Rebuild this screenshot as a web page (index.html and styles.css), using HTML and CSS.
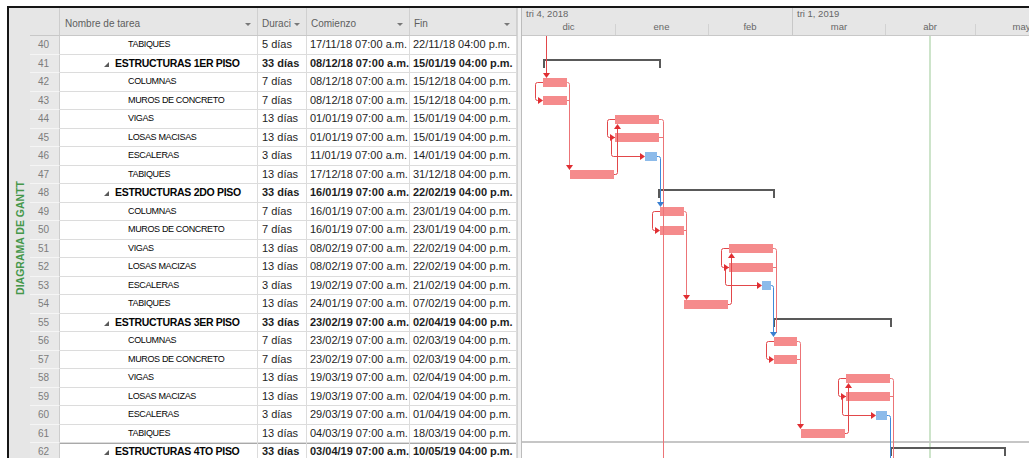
FILE: index.html
```html
<!DOCTYPE html>
<html lang="es">
<head>
<meta charset="utf-8">
<title>Diagrama de Gantt</title>
<link rel="stylesheet" href="styles.css">
</head>
<body>
<div class="frame">
  <div class="view-label"><span>DIAGRAMA DE GANTT</span></div>

  <div class="sheet">
    <div class="head">
      <div class="hcell"></div>
      <div class="hcell"><span>Nombre de tarea</span><i class="caret"></i></div>
      <div class="hcell"><span>Duraci</span><i class="caret"></i></div>
      <div class="hcell"><span>Comienzo</span><i class="caret"></i></div>
      <div class="hcell"><span>Fin</span><i class="caret"></i></div>
    </div>

    <div class="row"><div class="num">40</div><div class="name">TABIQUES</div><div class="dur">5 días</div><div class="date">17/11/18 07:00 a.m.</div><div class="date">22/11/18 04:00 p.m.</div></div>
    <div class="row summary"><div class="num">41</div><div class="name"><i class="twisty"></i>ESTRUCTURAS 1ER PISO</div><div class="dur">33 días</div><div class="date">08/12/18 07:00 a.m.</div><div class="date">15/01/19 04:00 p.m.</div></div>
    <div class="row"><div class="num">42</div><div class="name">COLUMNAS</div><div class="dur">7 días</div><div class="date">08/12/18 07:00 a.m.</div><div class="date">15/12/18 04:00 p.m.</div></div>
    <div class="row"><div class="num">43</div><div class="name">MUROS DE CONCRETO</div><div class="dur">7 días</div><div class="date">08/12/18 07:00 a.m.</div><div class="date">15/12/18 04:00 p.m.</div></div>
    <div class="row"><div class="num">44</div><div class="name">VIGAS</div><div class="dur">13 días</div><div class="date">01/01/19 07:00 a.m.</div><div class="date">15/01/19 04:00 p.m.</div></div>
    <div class="row"><div class="num">45</div><div class="name">LOSAS MACISAS</div><div class="dur">13 días</div><div class="date">01/01/19 07:00 a.m.</div><div class="date">15/01/19 04:00 p.m.</div></div>
    <div class="row"><div class="num">46</div><div class="name">ESCALERAS</div><div class="dur">3 días</div><div class="date">11/01/19 07:00 a.m.</div><div class="date">14/01/19 04:00 p.m.</div></div>
    <div class="row"><div class="num">47</div><div class="name">TABIQUES</div><div class="dur">13 días</div><div class="date">17/12/18 07:00 a.m.</div><div class="date">31/12/18 04:00 p.m.</div></div>
    <div class="row summary"><div class="num">48</div><div class="name"><i class="twisty"></i>ESTRUCTURAS 2DO PISO</div><div class="dur">33 días</div><div class="date">16/01/19 07:00 a.m.</div><div class="date">22/02/19 04:00 p.m.</div></div>
    <div class="row"><div class="num">49</div><div class="name">COLUMNAS</div><div class="dur">7 días</div><div class="date">16/01/19 07:00 a.m.</div><div class="date">23/01/19 04:00 p.m.</div></div>
    <div class="row"><div class="num">50</div><div class="name">MUROS DE CONCRETO</div><div class="dur">7 días</div><div class="date">16/01/19 07:00 a.m.</div><div class="date">23/01/19 04:00 p.m.</div></div>
    <div class="row"><div class="num">51</div><div class="name">VIGAS</div><div class="dur">13 días</div><div class="date">08/02/19 07:00 a.m.</div><div class="date">22/02/19 04:00 p.m.</div></div>
    <div class="row"><div class="num">52</div><div class="name">LOSAS MACIZAS</div><div class="dur">13 días</div><div class="date">08/02/19 07:00 a.m.</div><div class="date">22/02/19 04:00 p.m.</div></div>
    <div class="row"><div class="num">53</div><div class="name">ESCALERAS</div><div class="dur">3 días</div><div class="date">19/02/19 07:00 a.m.</div><div class="date">21/02/19 04:00 p.m.</div></div>
    <div class="row"><div class="num">54</div><div class="name">TABIQUES</div><div class="dur">13 días</div><div class="date">24/01/19 07:00 a.m.</div><div class="date">07/02/19 04:00 p.m.</div></div>
    <div class="row summary"><div class="num">55</div><div class="name"><i class="twisty"></i>ESTRUCTURAS 3ER PISO</div><div class="dur">33 días</div><div class="date">23/02/19 07:00 a.m.</div><div class="date">02/04/19 04:00 p.m.</div></div>
    <div class="row"><div class="num">56</div><div class="name">COLUMNAS</div><div class="dur">7 días</div><div class="date">23/02/19 07:00 a.m.</div><div class="date">02/03/19 04:00 p.m.</div></div>
    <div class="row"><div class="num">57</div><div class="name">MUROS DE CONCRETO</div><div class="dur">7 días</div><div class="date">23/02/19 07:00 a.m.</div><div class="date">02/03/19 04:00 p.m.</div></div>
    <div class="row"><div class="num">58</div><div class="name">VIGAS</div><div class="dur">13 días</div><div class="date">19/03/19 07:00 a.m.</div><div class="date">02/04/19 04:00 p.m.</div></div>
    <div class="row"><div class="num">59</div><div class="name">LOSAS MACIZAS</div><div class="dur">13 días</div><div class="date">19/03/19 07:00 a.m.</div><div class="date">02/04/19 04:00 p.m.</div></div>
    <div class="row"><div class="num">60</div><div class="name">ESCALERAS</div><div class="dur">3 días</div><div class="date">29/03/19 07:00 a.m.</div><div class="date">01/04/19 04:00 p.m.</div></div>
    <div class="row"><div class="num">61</div><div class="name">TABIQUES</div><div class="dur">13 días</div><div class="date">04/03/19 07:00 a.m.</div><div class="date">18/03/19 04:00 p.m.</div></div>
    <div class="row summary page-break"><div class="num">62</div><div class="name"><i class="twisty"></i>ESTRUCTURAS 4TO PISO</div><div class="dur">33 días</div><div class="date">03/04/19 07:00 a.m.</div><div class="date">10/05/19 04:00 p.m.</div></div>
  </div>

  <div class="splitter"></div>

  <div class="chart">
    <div class="scale">
      <div class="tier quarters">
        <div class="quarter q4">tri 4, 2018</div>
        <div class="quarter q1">tri 1, 2019</div>
      </div>
      <div class="tier months">
        <div class="month m93">dic</div>
        <div class="month m93">ene</div>
        <div class="month m84">feb</div>
        <div class="month m93 qstart">mar</div>
        <div class="month m90">abr</div>
        <div class="month m93">may</div>
      </div>
    </div>

    <svg class="bars" width="507" height="422" viewBox="522 36 507 422" xmlns="http://www.w3.org/2000/svg">
      <!-- status / break lines -->
      <rect x="929" y="36" width="2" height="422" fill="#cde4ca"/>
      <rect x="522" y="441" width="507" height="2" fill="#c6c6c6"/>

      <!-- task bars -->
      <g fill="#f58b8c">
        <rect x="543" y="78" width="24" height="9"/>
        <rect x="543" y="96" width="24" height="9"/>
        <rect x="615" y="115" width="44" height="9"/>
        <rect x="615" y="133" width="44" height="9"/>
        <rect x="570" y="170" width="44" height="9"/>

        <rect x="660" y="207" width="24" height="9"/>
        <rect x="660" y="226" width="24" height="9"/>
        <rect x="729" y="244" width="44" height="9"/>
        <rect x="729" y="263" width="44" height="9"/>
        <rect x="684" y="300" width="44" height="9"/>

        <rect x="774" y="337" width="23" height="9"/>
        <rect x="774" y="355" width="23" height="9"/>
        <rect x="846" y="374" width="44" height="9"/>
        <rect x="846" y="392" width="44" height="9"/>
        <rect x="801" y="429" width="44" height="9"/>
      </g>
      <g fill="#8dbbea">
        <rect x="645" y="152" width="12" height="9"/>
        <rect x="762" y="281" width="9" height="9"/>
        <rect x="876" y="411" width="11" height="9"/>
      </g>

      <!-- summary brackets -->
      <g fill="none" stroke="#595959" stroke-width="2">
        <path d="M544,68 V60 H660 V68"/>
        <path d="M659,198 V190 H774 V198"/>
        <path d="M774,327 V319 H891 V327"/>
        <path d="M891,456 V448 H1005 V456"/>
      </g>

      <!-- finish-side links -->
      <g fill="none" stroke="#ec7477" stroke-width="1">
        <path d="M567,82.5 H567.5 q2,0 2,2 V166"/>
        <path d="M567,100.5 H569.5"/>
        <path d="M659,119.5 H661.5 q2,0 2,2 V458"/>
        <path d="M659,137.5 H663.5"/>
        <path d="M684,211.5 H684.5 q2,0 2,2 V296"/>
        <path d="M684,230.5 H686.5"/>
        <path d="M773,248.5 H774.5 q2,0 2,2 V333"/>
        <path d="M773,267.5 H776.5"/>
        <path d="M797,341.5 H798.5 q2,0 2,2 V425"/>
        <path d="M797,359.5 H800.5"/>
        <path d="M890,378.5 H891.5 q2,0 2,2 V458"/>
        <path d="M890,396.5 H893.5"/>
      </g>

      <!-- start-side and return links -->
      <g fill="none" stroke="#e2474a" stroke-width="1">
        <path d="M546.5,36 V74"/>
        <path d="M543,82.5 H537.5 q-2,0 -2,2 V98.5 q0,2 2,2 H539"/>
        <path d="M614,174.5 H615.5 q2,0 2,-2 V128"/>
        <path d="M615,119.5 H609.5 q-2,0 -2,2 V135.5 q0,2 2,2 H611"/>
        <path d="M615,137.5 H613.5 q-2,0 -2,2 V154.5 q0,2 2,2 H641"/>

        <path d="M660,211.5 H654.5 q-2,0 -2,2 V228.5 q0,2 2,2 H656"/>
        <path d="M728,304.5 H729.5 q2,0 2,-2 V257"/>
        <path d="M729,248.5 H723.5 q-2,0 -2,2 V265.5 q0,2 2,2 H725"/>
        <path d="M729,267.5 H727.5 q-2,0 -2,2 V283.5 q0,2 2,2 H758"/>

        <path d="M774,341.5 H768.5 q-2,0 -2,2 V357.5 q0,2 2,2 H770"/>
        <path d="M845,433.5 H846.5 q2,0 2,-2 V387"/>
        <path d="M846,378.5 H840.5 q-2,0 -2,2 V394.5 q0,2 2,2 H842"/>
        <path d="M846,396.5 H844.5 q-2,0 -2,2 V413.5 q0,2 2,2 H872"/>
      </g>
      <g fill="#e02e32">
        <polygon points="543,73 550,73 546.5,78"/>
        <polygon points="538,97 538,104 543,100.5"/>
        <polygon points="566,165 573,165 569.5,170"/>
        <polygon points="614,129 621,129 617.5,124"/>
        <polygon points="610,134 610,141 615,137.5"/>
        <polygon points="640,153 640,160 645,156.5"/>

        <polygon points="655,227 655,234 660,230.5"/>
        <polygon points="683,295 690,295 686.5,300"/>
        <polygon points="728,258 735,258 731.5,253"/>
        <polygon points="724,264 724,271 729,267.5"/>
        <polygon points="757,282 757,289 762,285.5"/>

        <polygon points="769,356 769,363 774,359.5"/>
        <polygon points="797,424 804,424 800.5,429"/>
        <polygon points="845,388 852,388 848.5,383"/>
        <polygon points="841,393 841,400 846,396.5"/>
        <polygon points="871,412 871,419 876,415.5"/>
      </g>

      <!-- non-critical links -->
      <g fill="none" stroke="#3f89da" stroke-width="1">
        <path d="M657,156.5 H658.5 q2,0 2,2 V203"/>
        <path d="M771,285.5 H771.5 q2,0 2,2 V333"/>
        <path d="M887,415.5 H888.5 q2,0 2,2 V458"/>
      </g>
      <g fill="#3a7fd0">
        <polygon points="657,202 664,202 660.5,207"/>
        <polygon points="770,332 777,332 773.5,337"/>
      </g>
    </svg>
  </div>
</div>
</body>
</html>
```

FILE: styles.css
```css
* {
  box-sizing: border-box;
}

html,
body {
  margin: 0;
  height: 100%;
  overflow: hidden;
  background: #fff;
}

body {
  font-family: "Liberation Sans", Arial, sans-serif;
  color: #1e1e1e;
}

/* outer window frame */
.frame {
  display: flex;
  height: 452px;
  margin: 6px 0 0 7px;
  border-top: 2px solid #161616;
  border-left: 2px solid #161616;
  overflow: hidden;
}

/* vertical view name */
.view-label {
  flex: 0 0 21px;
  background: #e6e6e6;
  display: flex;
  align-items: center;
  justify-content: center;
  padding-top: 10px;
}

.view-label span {
  writing-mode: vertical-rl;
  transform: rotate(180deg);
  color: #45974a;
  font-weight: bold;
  font-size: 10.5px;
  white-space: nowrap;
}

/* task sheet */
.sheet {
  flex: 0 0 487px;
  display: flex;
  flex-direction: column;
}

.head,
.row {
  display: grid;
  grid-template-columns: 30px 198px 49px 103px 107px;
}

.head {
  flex: 0 0 28px;
  background: #e6e6e6;
  border-bottom: 1px solid #c8c8c8;
}

.hcell {
  display: flex;
  align-items: flex-end;
  justify-content: space-between;
  padding: 0 6px 5px 4px;
  border-right: 1px solid #d0d0d0;
  font-size: 10px;
  line-height: 13px;
  color: #5e5e5e;
  white-space: nowrap;
}

.hcell:first-child {
  border-right-color: #cdcdcd;
}

.hcell:nth-child(2) {
  padding-left: 5px;
}

.caret {
  width: 0;
  height: 0;
  margin-bottom: 4px;
  border-left: 3px solid transparent;
  border-right: 3px solid transparent;
  border-top: 3px solid #787878;
}

.row {
  flex: 0 0 18.5px;
  height: 18.5px;
}

.row > div {
  background: #fff;
  border-right: 1px solid #dcdcdc;
  border-bottom: 1px solid #dcdcdc;
  white-space: nowrap;
  overflow: hidden;
  font-size: 11px;
  line-height: 17.5px;
}

.row > .num {
  background: #e8e8e8;
  border-right-color: #cdcdcd;
  border-bottom-color: #f5f5f5;
  color: #7c7c7c;
  font-size: 10px;
  font-weight: normal;
  text-align: right;
  padding-right: 10px;
}

.row > .name {
  font-size: 9px;
  letter-spacing: -0.35px;
  color: #050505;
  padding-left: 68px;
}

.row > .dur {
  padding-left: 4px;
}

.row > .date {
  padding-left: 3px;
}

.summary > .name,
.summary > .dur,
.summary > .date {
  font-weight: bold;
}

.summary > .name {
  display: flex;
  align-items: center;
  font-size: 10.5px;
  letter-spacing: -0.3px;
  padding-left: 44px;
}

.twisty {
  width: 0;
  height: 0;
  margin: 2px 6px 0 0;
  border-left: 5px solid transparent;
  border-bottom: 5px solid #5a5a5a;
}

.page-break > div:not(.num) {
  box-shadow: inset 0 1px 0 #a9a9a9;
}

/* divider between sheet and chart */
.splitter {
  flex: 0 0 5px;
  background: #f2f2f2;
  border-left: 1px solid #d4d4d4;
  border-right: 1px solid #bcbcbc;
}

/* gantt chart */
.chart {
  flex: 1 1 auto;
  display: flex;
  flex-direction: column;
  min-width: 0;
}

.scale {
  flex: 0 0 28px;
  background: #e6e6e6;
  border-bottom: 1px solid #c8c8c8;
  display: flex;
  flex-direction: column;
  font-size: 9.5px;
  color: #666;
}

.tier {
  display: flex;
  white-space: nowrap;
}

.quarters {
  height: 13px;
}

.quarter {
  padding-left: 4px;
  line-height: 12px;
}

.q4 {
  flex: 0 0 270px;
}

.q1 {
  flex: 1 0 auto;
  border-left: 1px solid #c8c8c8;
}

.months {
  height: 14px;
}

.month {
  display: flex;
  justify-content: center;
  line-height: 12px;
  background: linear-gradient(#d2d2d2, #d2d2d2) left bottom / 1px 11px no-repeat;
}

.month:first-child {
  background: none;
}

.month.qstart {
  background: none;
  border-left: 1px solid #c8c8c8;
}

.m93 {
  flex: 0 0 93px;
}

.m90 {
  flex: 0 0 90px;
}

.m84 {
  flex: 0 0 84px;
}

.bars {
  display: block;
  flex: 0 0 auto;
}
```
